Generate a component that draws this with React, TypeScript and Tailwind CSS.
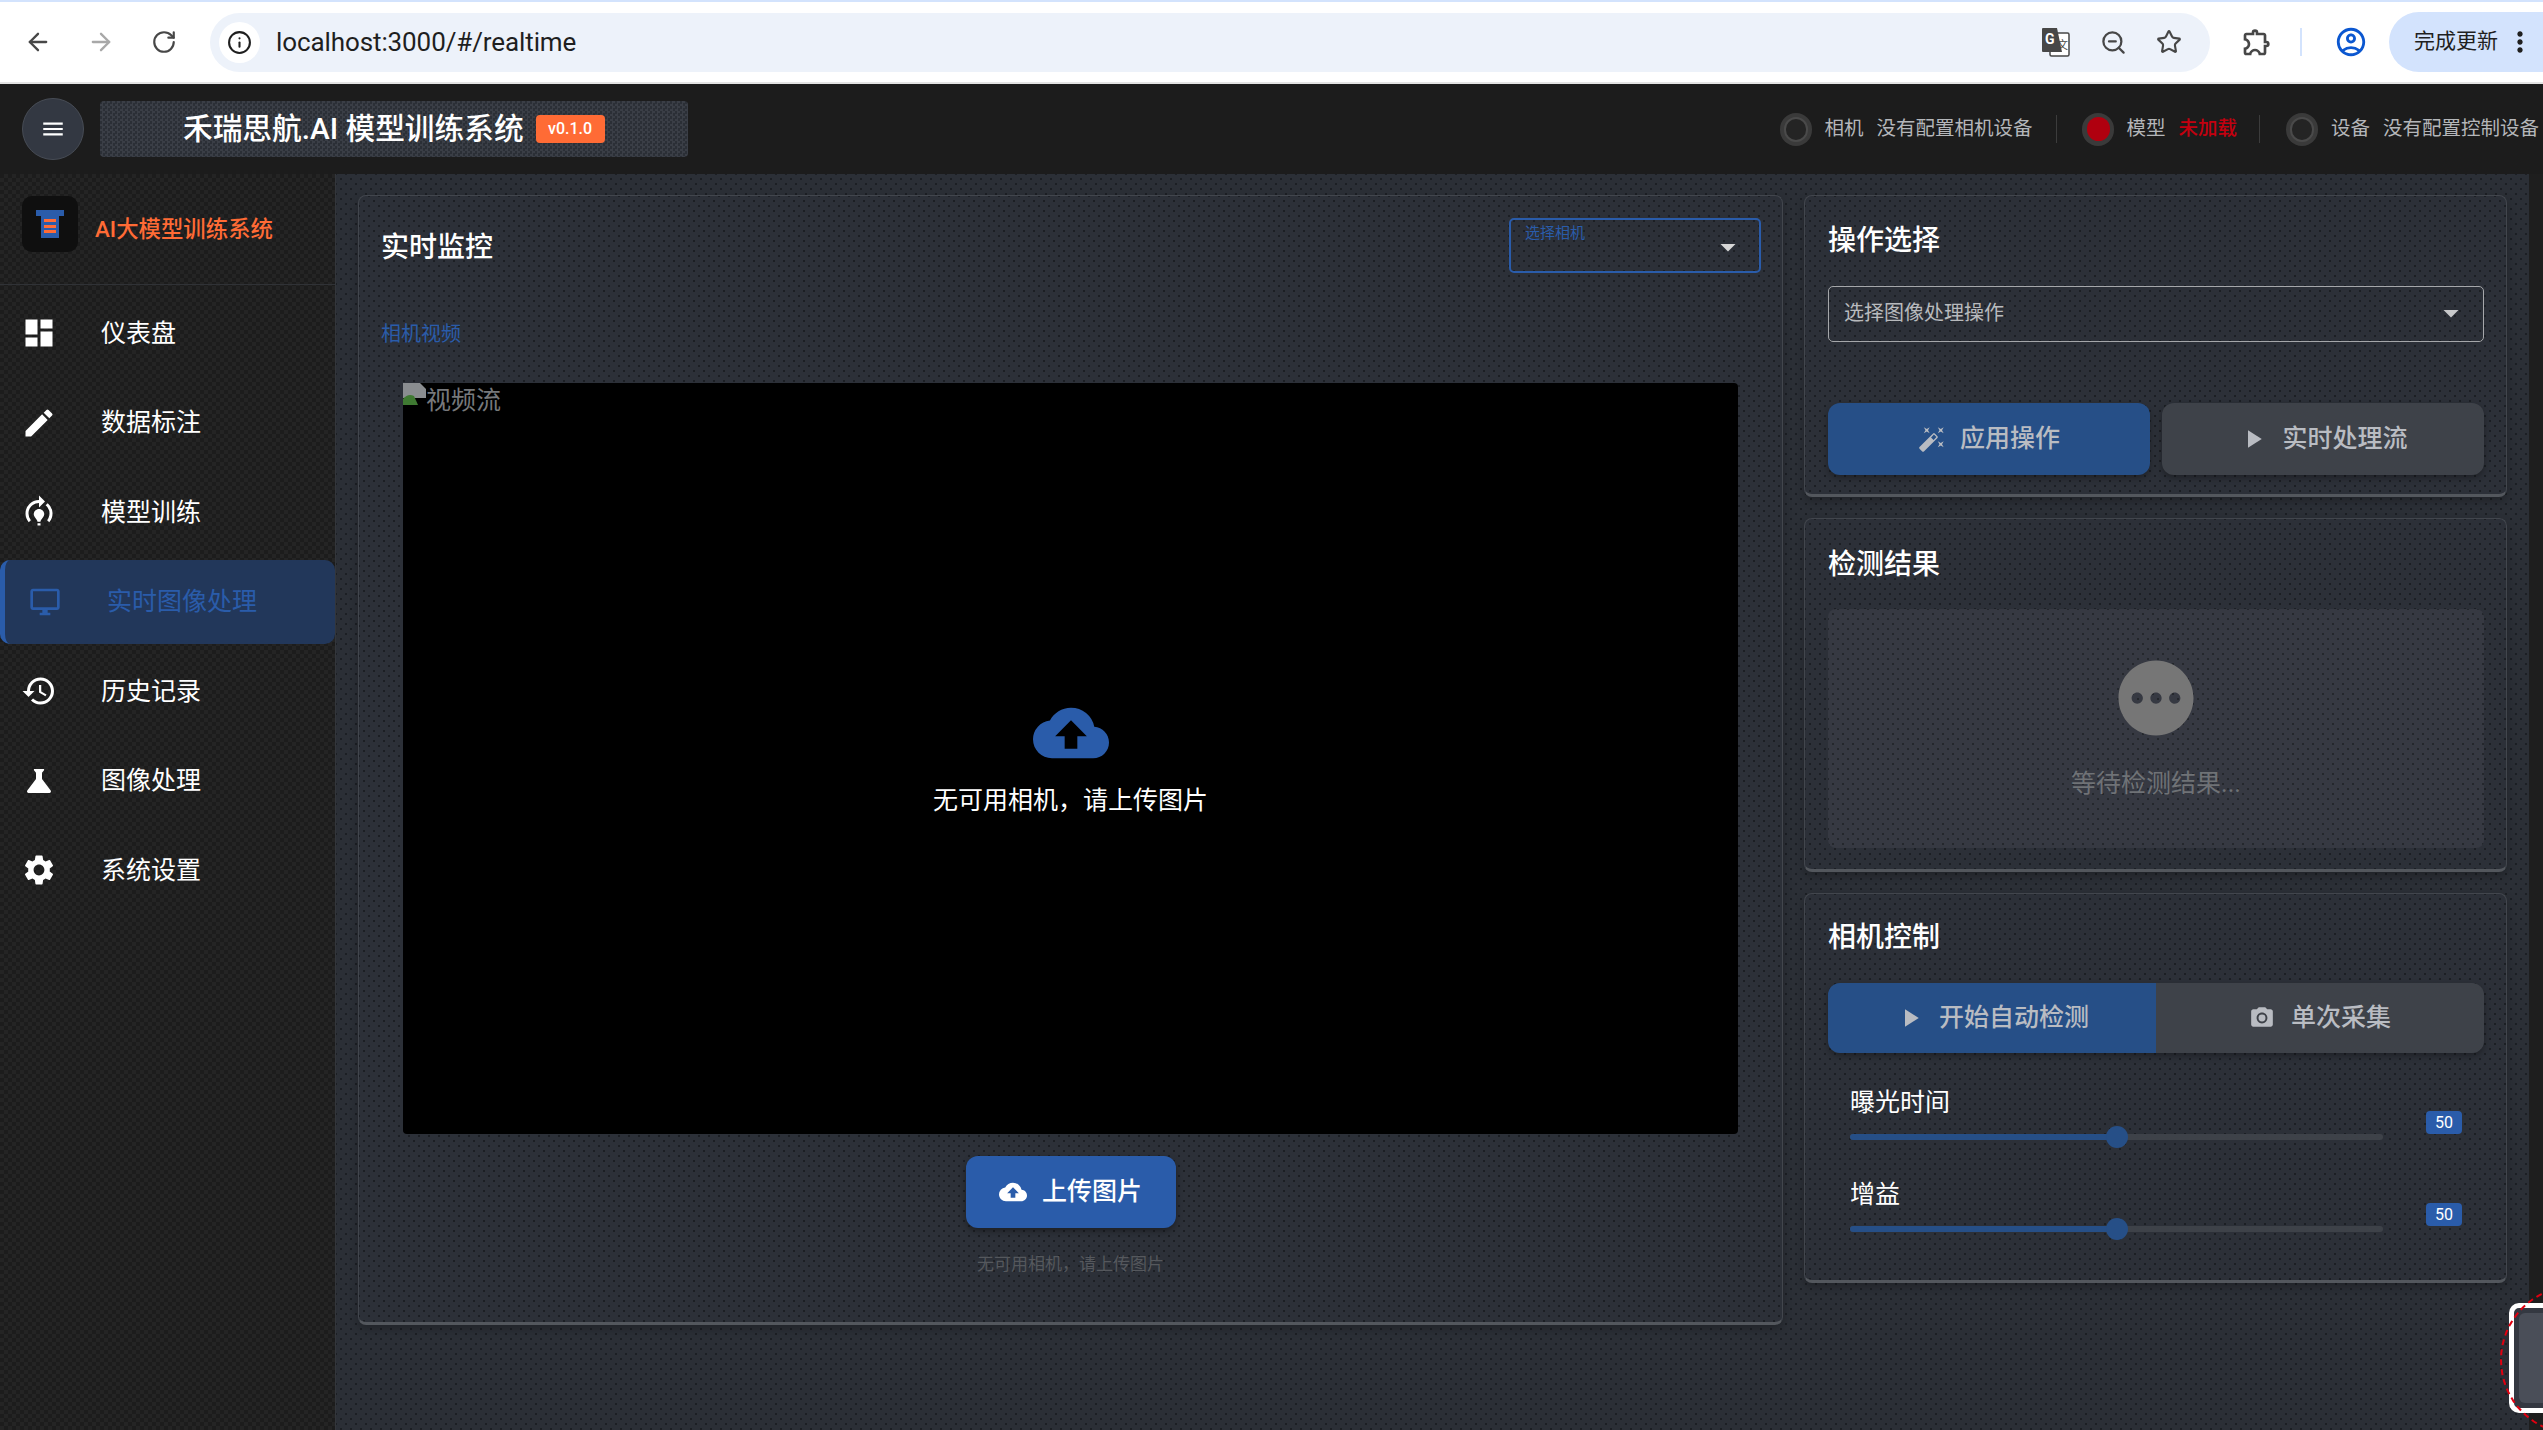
import { ArrowLeft, ArrowRight, Info, RotateCw, Star, ZoomOut } from 'lucide-react'
import type { ReactNode } from 'react'
import {
  MdArrowDropDown,
  MdAutoFixHigh,
  MdCameraAlt,
  MdCloudUpload,
  MdDashboard,
  MdEdit,
  MdHistory,
  MdMenu,
  MdModelTraining,
  MdMoreVert,
  MdOutlineAccountCircle,
  MdOutlineDesktopWindows,
  MdOutlineExtension,
  MdPending,
  MdPlayArrow,
  MdScience,
  MdSettings,
} from 'react-icons/md'

const navItems = [
  { label: '仪表盘', icon: MdDashboard },
  { label: '数据标注', icon: MdEdit },
  { label: '模型训练', icon: MdModelTraining },
  { label: '实时图像处理', icon: MdOutlineDesktopWindows, active: true },
  { label: '历史记录', icon: MdHistory },
  { label: '图像处理', icon: MdScience },
  { label: '系统设置', icon: MdSettings },
]

function BrowserBar() {
  return (
    <div className="h-[84px] shrink-0 bg-white border-t-2 border-t-[#d3e3fd] border-b-2 border-b-[#e3e3e3] flex items-center text-[#474747]">
      <ArrowLeft className="ml-[24px] w-[28px] h-[28px]" strokeWidth={2} />
      <ArrowRight className="ml-[35px] w-[28px] h-[28px] text-[#a8a8a8]" strokeWidth={2} />
      <RotateCw className="ml-[36px] w-[26px] h-[26px]" strokeWidth={2} />
      <div className="ml-[33px] w-[2000px] h-[59px] rounded-full bg-[#edf2fa] flex items-center">
        <div className="ml-[9px] w-[41px] h-[41px] rounded-full bg-white flex items-center justify-center">
          <Info className="w-[25px] h-[25px] text-[#1f1f1f]" strokeWidth={2} />
        </div>
        <span className="ml-[16px] text-[26px] text-[#1f1f1f] tracking-[-0.1px]">localhost:3000/#/realtime</span>
        <div className="ml-auto flex items-center">
          <TranslateIcon />
          <ZoomOut className="ml-[30px] w-[27px] h-[27px]" strokeWidth={2} />
          <Star className="ml-[29px] w-[26px] h-[26px] mr-[28px]" strokeWidth={2} />
        </div>
      </div>
      <MdOutlineExtension className="ml-[31px] w-[32px] h-[32px]" />
      <div className="ml-[27px] w-[2px] h-[28px] bg-[#d3e3fd]" />
      <MdOutlineAccountCircle className="ml-[32px] w-[34px] h-[34px] text-[#0b57d0]" />
      <div className="ml-[21px] flex-1 h-[60px] rounded-l-full bg-[#d3e3fd] flex items-center pl-[25px]">
        <span className="text-[21px] text-[#1f1f1f]">完成更新</span>
        <MdMoreVert className="ml-[6px] w-[32px] h-[32px] text-[#1f1f1f]" />
      </div>
    </div>
  )
}

function TranslateIcon() {
  return (
    <svg width="29" height="30" viewBox="0 0 29 30">
      <rect x="9" y="6" width="19" height="23" rx="1.5" fill="#fff" stroke="#474747" strokeWidth="1.5" />
      <path d="M2 1h14l5 24H2a1 1 0 0 1-1-1V2a1 1 0 0 1 1-1z" fill="#474747" />
      <text x="4" y="17" fontSize="14" fontWeight="700" fill="#fff">G</text>
      <text x="16" y="22" fontSize="11" fill="#474747">文</text>
    </svg>
  )
}

function StatusDot({ red }: { red?: boolean }) {
  return (
    <div className="w-[32px] h-[33px] rounded-full bg-[#3a3a3a] flex items-center justify-center">
      <div
        className={
          red
            ? 'w-[23px] h-[24px] rounded-full bg-[#b0000f]'
            : 'w-[24px] h-[25px] rounded-full bg-[#242424] border-2 border-[#4a4a4a]'
        }
      />
    </div>
  )
}

function AppHeader() {
  return (
    <header className="h-[90px] shrink-0 bg-[#1c1c1c] flex items-center">
      <div className="ml-[22px] w-[62px] h-[62px] rounded-full bg-[#333842] border border-[#474c55] flex items-center justify-center">
        <MdMenu className="w-[26px] h-[26px] text-white" />
      </div>
      <div className="ml-[16px] w-[588px] h-[56px] rounded-[4px] bg-[#30343b] bg-[repeating-conic-gradient(#3a3e46_0_25%,#2b2f36_0_50%)] bg-[size:5px_5px] flex items-center pl-[83px]">
        <span className="text-[29.7px] font-medium text-white leading-none">禾瑞思航.AI 模型训练系统</span>
        <span className="ml-[12px] w-[69px] h-[28px] rounded-[4px] bg-[#ff6b35] text-white text-[16px] font-medium flex items-center justify-center">
          v0.1.0
        </span>
      </div>
      <div className="ml-auto flex items-center text-[19.5px] text-[#b4b6b9] pr-[4px]">
        <StatusDot />
        <span className="ml-[12px]">相机</span>
        <span className="ml-[13px]">没有配置相机设备</span>
        <div className="ml-[24px] w-px h-[28px] bg-[#3c3c3c]" />
        <div className="ml-[25px]"><StatusDot red /></div>
        <span className="ml-[12px]">模型</span>
        <span className="ml-[13px] text-[#c4000f] font-medium">未加载</span>
        <div className="ml-[22px] w-px h-[28px] bg-[#3c3c3c]" />
        <div className="ml-[26px]"><StatusDot /></div>
        <span className="ml-[13px]">设备</span>
        <span className="ml-[13px]">没有配置控制设备</span>
      </div>
    </header>
  )
}

function Sidebar() {
  return (
    <aside className="w-[336px] shrink-0 border-r border-[#33363b] bg-[#1e1e1e] bg-[repeating-conic-gradient(#242424_0_25%,#1c1c1c_0_50%)] bg-[size:8px_8px]">
      <div className="h-[111px] border-b border-[#303236] flex items-center pl-[22px] pb-[10px]">
        <div className="w-[56px] h-[56px] rounded-[10px] bg-[#0f0f0f] flex items-center justify-center">
          <svg width="28" height="28" viewBox="0 0 28 28">
            <rect x="0" y="0" width="28" height="6" fill="#2a5caa" />
            <rect x="5" y="6" width="18" height="22" fill="#2a5caa" />
            <rect x="8" y="9" width="12" height="3" fill="#ff6b35" />
            <rect x="8" y="15" width="12" height="3" fill="#ff6b35" />
            <rect x="8" y="20" width="12" height="3" fill="#ff6b35" />
          </svg>
        </div>
        <span className="ml-[17px] mt-[10px] text-[22.4px] font-medium text-[#ff6b35] leading-none">AI大模型训练系统</span>
      </div>
      <nav className="pt-[6px] flex flex-col gap-[5.5px]">
        {navItems.map((item) =>
          item.active ? (
            <div
              key={item.label}
              className="h-[84px] flex items-center pl-[24px] border-l-[5px] border-[#2a5caa] rounded-[10px] bg-[#22375a] text-[#2a5caa]"
            >
              <item.icon className="w-[32px] h-[32px] shrink-0" />
              <span className="ml-[46px] text-[25px] leading-none">{item.label}</span>
            </div>
          ) : (
            <div key={item.label} className="h-[84px] flex items-center pl-[21px] text-white">
              <item.icon className="w-[36px] h-[36px] shrink-0" />
              <span className="ml-[44px] text-[25px] leading-none">{item.label}</span>
            </div>
          ),
        )}
      </nav>
    </aside>
  )
}

function Card({ className, children }: { className?: string; children: ReactNode }) {
  return (
    <section
      className={`rounded-[8px] border border-[#42464d] border-b-[3px] border-b-[#53575d] bg-[#2c3038] bg-[radial-gradient(#1c1f24_0.9px,transparent_1.2px),radial-gradient(#1c1f24_0.9px,transparent_1.2px)] bg-[size:10px_10px] bg-[position:0_0,5px_5px] shadow-[0_4px_8px_rgba(0,0,0,0.25)] ${className ?? ''}`}
    >
      {children}
    </section>
  )
}

function CardTitle({ children }: { children: ReactNode }) {
  return <h2 className="h-[40px] leading-[44px] text-[28px] font-medium text-white">{children}</h2>
}

function MonitorCard() {
  return (
    <Card className="w-[1425px] h-[1130px] pl-[22px] pr-[21px] pt-[22px]">
      <div className="flex items-center justify-between h-[55px]">
        <CardTitle>实时监控</CardTitle>
        <div className="w-[252px] h-[55px] rounded-[5px] border-2 border-[#2a5caa] flex pl-[14px] pr-[21px]">
          <span className="pt-[3px] text-[15px] leading-[20px] text-[#2a5caa]">选择相机</span>
          <MdArrowDropDown className="ml-auto mt-[9px] w-[36px] h-[36px] -mr-[8px] text-[#d6d6d6]" />
        </div>
      </div>
      <div className="mt-[47px] h-[28px] leading-[28px] text-[20px] text-[#2a5caa]">相机视频</div>
      <div className="relative mt-[35px] ml-[22px] w-[1335px] h-[751px] rounded-[4px] bg-black flex flex-col items-center justify-center pb-[5px]">
        <div className="absolute left-0 top-0 flex items-start">
          <svg width="23" height="22" viewBox="0 0 23 22">
            <path d="M0 0h17l6 6v9H0z" fill="#8a8d90" />
            <path d="M0 22V16q5-6 11-3l4 9z" fill="#3f7a32" />
          </svg>
          <span className="mt-[3px] text-[25px] leading-[30px] text-[#77797c]">视频流</span>
        </div>
        <MdCloudUpload className="w-[76px] h-[76px] text-[#2a5caa]" />
        <p className="mt-[13px] text-[25px] leading-[34px] text-white">无可用相机，请上传图片</p>
      </div>
      <div className="ml-[22px] w-[1335px] flex flex-col items-center">
        <button className="mt-[22px] w-[210px] h-[72px] rounded-[12px] bg-[#2a5caa] text-white text-[25px] font-medium flex items-center justify-center shadow-[0_3px_6px_rgba(0,0,0,0.35)]">
          <MdCloudUpload className="w-[28px] h-[28px]" />
          <span className="ml-[15px]">上传图片</span>
        </button>
        <p className="mt-[24px] text-[17px] leading-[24px] text-[#55585d]">无可用相机，请上传图片</p>
      </div>
    </Card>
  )
}

function OperationCard() {
  return (
    <Card className="h-[302px] pl-[23px] pr-[22px] pt-[23px]">
      <CardTitle>操作选择</CardTitle>
      <div className="mt-[27px] h-[56px] rounded-[5px] border border-[#a5a7aa] flex items-center pl-[15px] pr-[14px] pb-[2px] text-[20px] text-[#b8babd]">
        <span>选择图像处理操作</span>
        <MdArrowDropDown className="ml-auto w-[36px] h-[36px] text-[#c8c9cb]" />
      </div>
      <div className="mt-[61px] flex gap-[12px]">
        <button className="flex-1 h-[72px] rounded-[12px] bg-[#264f87] text-[#b9bcc2] text-[25px] font-medium flex items-center justify-center shadow-[0_3px_6px_rgba(0,0,0,0.3)]">
          <MdAutoFixHigh className="w-[28px] h-[28px]" />
          <span className="ml-[14px]">应用操作</span>
        </button>
        <button className="flex-1 h-[72px] rounded-[12px] bg-[#3e4249] text-[#b9bcc2] text-[25px] font-medium flex items-center justify-center shadow-[0_3px_6px_rgba(0,0,0,0.3)]">
          <MdPlayArrow className="w-[30px] h-[30px]" />
          <span className="ml-[14px]">实时处理流</span>
        </button>
      </div>
    </Card>
  )
}

function ResultCard() {
  return (
    <Card className="h-[354px] pl-[23px] pr-[22px] pt-[24px]">
      <CardTitle>检测结果</CardTitle>
      <div className="mt-[26px] h-[239px] rounded-[8px] bg-[#363942] bg-[radial-gradient(#24272c_0.9px,transparent_1.2px),radial-gradient(#24272c_0.9px,transparent_1.2px)] bg-[size:10px_10px] bg-[position:0_0,5px_5px] flex flex-col items-center pt-[44px]">
        <MdPending className="w-[90px] h-[90px] text-[#767676]" />
        <p className="mt-[24px] text-[25px] leading-[34px] text-[#6f7276]">等待检测结果...</p>
      </div>
    </Card>
  )
}

function SliderRow({ label }: { label: string }) {
  return (
    <div className="flex items-start pl-[22px]">
      <div className="w-[533px]">
        <div className="h-[34px] leading-[36px] text-[25px] text-white">{label}</div>
        <div className="relative mt-[15px] h-[6px] rounded-full bg-[#3e4249]">
          <div className="h-full w-1/2 rounded-full bg-[#264f87]" />
          <div className="absolute left-1/2 top-[3px] -translate-x-1/2 -translate-y-1/2 w-[22px] h-[22px] rounded-full bg-[#264f87]" />
        </div>
      </div>
      <div className="ml-[43px] mt-[26px] w-[36px] h-[23px] rounded-[4px] bg-[#2a5caa] text-white text-[16px] flex items-center justify-center">
        50
      </div>
    </div>
  )
}

function CameraCard() {
  return (
    <Card className="h-[390px] pl-[23px] pr-[22px] pt-[22px]">
      <CardTitle>相机控制</CardTitle>
      <div className="mt-[27px] h-[70px] flex rounded-[12px] overflow-hidden text-[25px] font-medium text-[#b9bcc2] shadow-[0_3px_6px_rgba(0,0,0,0.3)]">
        <div className="flex-1 bg-[#264f87] flex items-center justify-center">
          <MdPlayArrow className="w-[30px] h-[30px]" />
          <span className="ml-[14px]">开始自动检测</span>
        </div>
        <div className="flex-1 bg-[#3e4249] flex items-center justify-center">
          <MdCameraAlt className="w-[26px] h-[26px]" />
          <span className="ml-[16px]">单次采集</span>
        </div>
      </div>
      <div className="mt-[32px] flex flex-col gap-[37px]">
        <SliderRow label="曝光时间" />
        <SliderRow label="增益" />
      </div>
    </Card>
  )
}

export default function App() {
  return (
    <div className="relative w-[2543px] h-[1430px] overflow-hidden flex flex-col bg-[#1e1e1e] font-['Roboto','Noto_Sans_CJK_SC',sans-serif]">
      <BrowserBar />
      <AppHeader />
      <div className="flex-1 flex min-h-0">
        <Sidebar />
        <main className="w-[2193px] shrink-0 pl-[22px] pt-[21px] flex items-start gap-[21px] bg-[#2b2f36] bg-[radial-gradient(#1c1f24_0.9px,transparent_1.2px),radial-gradient(#1c1f24_0.9px,transparent_1.2px)] bg-[size:10px_10px] bg-[position:0_0,5px_5px]">
          <MonitorCard />
          <div className="w-[703px] flex flex-col gap-[21px]">
            <OperationCard />
            <ResultCard />
            <CameraCard />
          </div>
        </main>
      </div>
      {/* floating widget clipped by the window edge */}
      <div className="absolute left-[2509px] top-[1303px] w-[60px] h-[110px] rounded-[10px] border-[5px] border-white bg-[#343841] p-[5px]">
        <div className="w-full h-full rounded-[6px] bg-[#4a4e58]" />
      </div>
      <div className="absolute left-[2500px] top-[1285px] w-[150px] h-[150px] rounded-full border-2 border-dashed border-[#e00010]" />
    </div>
  )
}
